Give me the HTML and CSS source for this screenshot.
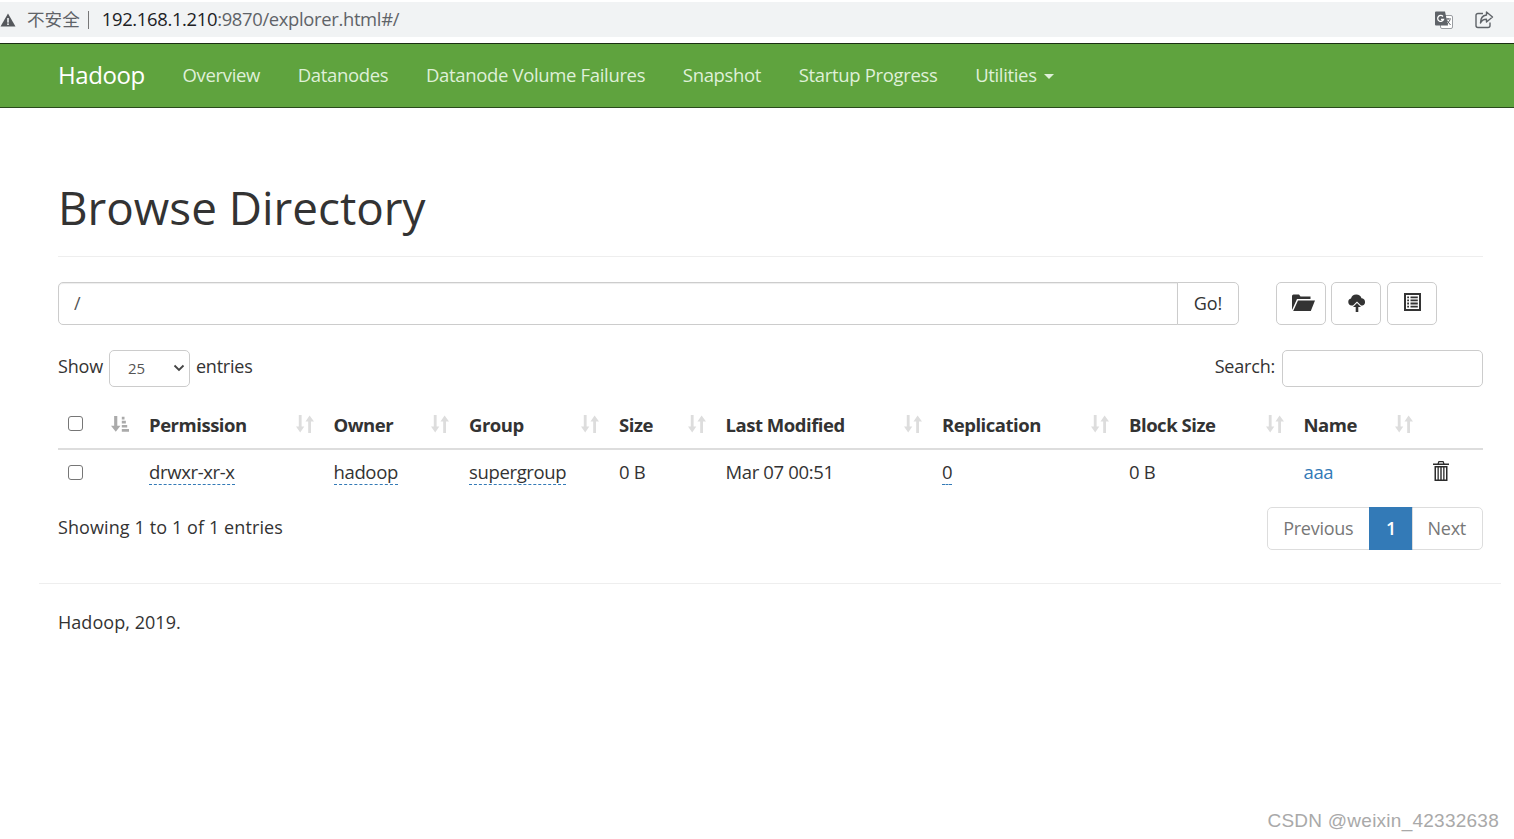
FILE: index.html
```html
<!DOCTYPE html>
<html lang="zh">
<head>
<meta charset="utf-8">
<title>Browsing HDFS</title>
<link rel="stylesheet" href="styles.css">
</head>
<body>
<div class="chrome">
  <div class="addr">
    <svg class="warn" viewBox="0 0 16 16" width="16" height="16"><path d="M8 1.500 15.500 14.500H.5Z" fill="#55585c"/><rect x="7.200" y="6" width="1.600" height="4.600" fill="#f1f3f4"/><rect x="7.200" y="11.400" width="1.600" height="1.600" fill="#f1f3f4"/></svg>
    <span class="insecure">不安全</span><span class="sep"></span>
    <span class="url"><span class="host">192.168.1.210</span>:9870/explorer.html#/</span>
    <span class="chrome-icons">
      <svg viewBox="0 0 20 20" width="20" height="20"><rect x="6.500" y="5.500" width="12" height="13" rx="1.500" fill="#fff" stroke="#9a9da1"/><path d="M1 2.500a1 1 0 0 1 1-1h9l3 14H2a1 1 0 0 1-1-1Z" fill="#5f6368"/><path d="M9 6.500A3 3 0 1 0 9.500 9.500H7" fill="none" stroke="#fff" stroke-width="1.300"/><path d="M11 9h6M14 8v1.500M12.500 15l3.500-5M12.500 10l4 5" fill="none" stroke="#5f6368"/></svg>
      <svg viewBox="0 0 20 20" width="20" height="20"><path d="M9 3.500H4a2 2 0 0 0-2 2v10a2 2 0 0 0 2 2h10a2 2 0 0 0 2-2v-3" fill="none" stroke="#5f6368" stroke-width="1.400"/><path d="M12.500 2 18.500 7l-6 5V9.200C9.500 9.200 7.500 10.500 6.500 13 6.500 9 8.500 5.500 12.500 5Z" fill="#f1f3f4" stroke="#5f6368" stroke-width="1.400" stroke-linejoin="round"/></svg>
    </span>
  </div>
</div>
<nav class="navbar">
  <a class="brand">Hadoop</a>
  <a class="nav-link">Overview</a>
  <a class="nav-link">Datanodes</a>
  <a class="nav-link">Datanode Volume Failures</a>
  <a class="nav-link">Snapshot</a>
  <a class="nav-link">Startup Progress</a>
  <a class="nav-link">Utilities <i class="caret"></i></a>
</nav>
<main class="container">
  <div class="page-header"><h1>Browse Directory</h1></div>
  <div class="toolbar">
    <div class="path-group">
      <input class="path-input" type="text" value="/">
      <button class="go-btn" type="button">Go!</button>
    </div>
    <div class="actions">
      <button class="icon-btn" type="button"><svg class="folder" viewBox="0 0 23 17" width="23" height="17"><path d="M0 15.500V2A1.500 1.500 0 0 1 1.500 .5H7L8.500 2.500H18.500V5H5L0.300 15.500ZM6 6.500H23L18.800 17H1.200Z" fill="#333"/></svg></button>
      <button class="icon-btn" type="button"><svg class="cloud" viewBox="0 0 18 18" width="18" height="18"><path d="M3.500 11.500a3.500 3.500 0 0 1-.5-6.900A5.500 5.500 0 0 1 13.500 4.300a3.700 3.700 0 0 1 1 7.200H13L9 7.500 5 11.500Z" fill="#333"/><path d="M9 9 13 13H10.300V18H7.700V13H5Z" fill="#333"/></svg></button>
      <button class="icon-btn" type="button"><svg class="list" viewBox="0 0 17 18" width="17" height="18"><path fill-rule="evenodd" d="M0 0H17V18H0ZM2 2V16H15V2Z" fill="#333"/><path d="M3.200 3.500H5V5.300H3.200ZM6.500 3.500H13.800V5.300H6.500ZM3.200 6.500H5V8.300H3.200ZM6.500 6.500H13.800V8.300H6.500ZM3.200 9.600H5V11.400H3.200ZM6.500 9.600H13.800V11.400H6.500ZM3.200 12.700H5V14.500H3.200ZM6.500 12.700H13.800V14.500H6.500Z" fill="#333"/></svg></button>
    </div>
  </div>
  <div class="table-controls">
    <label class="length"><span class="lift">Show</span> <span class="select-box">25<svg viewBox="0 0 12 8" width="12" height="8"><path d="M1.500 1.500 6 6l4.500-4.500" fill="none" stroke="#444" stroke-width="1.800"/></svg></span> <span class="lift">entries</span></label>
    <label class="filter"><span class="lift">Search:</span> <input class="search-input" type="search"></label>
  </div>
  <table class="listing">
    <colgroup>
      <col class="c0"><col class="c1"><col class="c2"><col class="c3"><col class="c4"><col class="c5"><col class="c6"><col class="c7"><col class="c8"><col class="c9">
    </colgroup>
    <thead>
      <tr>
        <th><div class="th-in"><span class="check head-check"></span><svg class="sort active" viewBox="0 0 20 18" width="18" height="18"><path d="M3.500 0H7V11H10.500L5.300 17.500 0 11H3.500Z"/><path d="M12 1H15V4H12ZM12 5.500H16.500V8.500H12ZM12 10H18V13H12ZM12 14.500H20V17.500H12Z"/></svg></div></th>
        <th><div class="th-in">Permission<svg class="sort" viewBox="0 0 18 18" width="18" height="18"><path d="M2.800 0H5.600V11.500H8.300L4.200 17.500 0 11.500H2.800Z"/><path d="M12.200 6.500V18H15V6.500H18L13.600 .5 9.500 6.500Z"/></svg></div></th>
        <th><div class="th-in">Owner<svg class="sort" viewBox="0 0 18 18" width="18" height="18"><path d="M2.800 0H5.600V11.500H8.300L4.200 17.500 0 11.500H2.800Z"/><path d="M12.200 6.500V18H15V6.500H18L13.600 .5 9.500 6.500Z"/></svg></div></th>
        <th><div class="th-in">Group<svg class="sort" viewBox="0 0 18 18" width="18" height="18"><path d="M2.800 0H5.600V11.500H8.300L4.200 17.500 0 11.500H2.800Z"/><path d="M12.200 6.500V18H15V6.500H18L13.600 .5 9.500 6.500Z"/></svg></div></th>
        <th><div class="th-in">Size<svg class="sort" viewBox="0 0 18 18" width="18" height="18"><path d="M2.800 0H5.600V11.500H8.300L4.200 17.500 0 11.500H2.800Z"/><path d="M12.200 6.500V18H15V6.500H18L13.600 .5 9.500 6.500Z"/></svg></div></th>
        <th><div class="th-in">Last Modified<svg class="sort" viewBox="0 0 18 18" width="18" height="18"><path d="M2.800 0H5.600V11.500H8.300L4.200 17.500 0 11.500H2.800Z"/><path d="M12.200 6.500V18H15V6.500H18L13.600 .5 9.500 6.500Z"/></svg></div></th>
        <th><div class="th-in">Replication<svg class="sort" viewBox="0 0 18 18" width="18" height="18"><path d="M2.800 0H5.600V11.500H8.300L4.200 17.500 0 11.500H2.800Z"/><path d="M12.200 6.500V18H15V6.500H18L13.600 .5 9.500 6.500Z"/></svg></div></th>
        <th><div class="th-in">Block Size<svg class="sort" viewBox="0 0 18 18" width="18" height="18"><path d="M2.800 0H5.600V11.500H8.300L4.200 17.500 0 11.500H2.800Z"/><path d="M12.200 6.500V18H15V6.500H18L13.600 .5 9.500 6.500Z"/></svg></div></th>
        <th><div class="th-in">Name<svg class="sort" viewBox="0 0 18 18" width="18" height="18"><path d="M2.800 0H5.600V11.500H8.300L4.200 17.500 0 11.500H2.800Z"/><path d="M12.200 6.500V18H15V6.500H18L13.600 .5 9.500 6.500Z"/></svg></div></th>
        <th></th>
      </tr>
    </thead>
    <tbody>
      <tr>
        <td><span class="check body-check"></span></td>
        <td><span class="editable">drwxr-xr-x</span></td>
        <td><span class="editable">hadoop</span></td>
        <td><span class="editable">supergroup</span></td>
        <td>0 B</td>
        <td>Mar 07 00:51</td>
        <td><span class="editable">0</span></td>
        <td>0 B</td>
        <td><a class="file-link">aaa</a></td>
        <td class="del"><svg viewBox="0 0 16 20" width="16" height="20"><path fill-rule="evenodd" d="M5.500 0H10.500L11.500 2.500H16V4H0V2.500H4.500ZM6.300 1.200 5.800 2.500H10.200L9.700 1.200ZM1.500 5H14.500V20H1.500ZM3 6.500V18.500H4.500V6.500ZM5.800 6.500V18.500H7.300V6.500ZM8.700 6.500V18.500H10.200V6.500ZM11.500 6.500V18.500H13V6.500Z" fill="#2b2b2b"/></svg></td>
      </tr>
    </tbody>
  </table>
  <div class="table-foot">
    <div class="info">Showing 1 to 1 of 1 entries</div>
    <ul class="pagination">
      <li class="page prev">Previous</li>
      <li class="page current">1</li>
      <li class="page next">Next</li>
    </ul>
  </div>
</main>
<hr class="rule">
<footer class="footer">Hadoop, 2019.</footer>
<div class="watermark">CSDN @weixin_42332638</div>
</body>
</html>
```

FILE: styles.css
```css
* { box-sizing: border-box; }
html, body { height: 100%; }
body {
  margin: 0;
  font-family: "Open Sans", "Noto Sans CJK SC", sans-serif;
  font-size: 18px;
  letter-spacing: -0.3px;
  line-height: 26px;
  color: #333;
  background: #fff;
  overflow: hidden;
  position: relative;
}
.chrome { height: 43px; padding-top: 2px; background: #fff; }
.addr {
  height: 35px;
  background: #f1f3f4;
  display: flex;
  align-items: center;
  font-size: 18px;
  color: #5f6368;
}
.warn { margin-left: 0; margin-right: 11px; }
.insecure { font-family: "Noto Sans CJK SC", sans-serif; font-size: 17.600px; letter-spacing: 0; margin-bottom: 2px; }
.sep { width: 1px; height: 18px; background: #777; margin: 0 13px 0 8px; }
.url { color: #5f6368; font-size: 18.400px; margin-bottom: 2px; letter-spacing: -0.33px; }
.host { color: #202124; }
.chrome-icons { margin-left: auto; margin-right: 20px; display: flex; gap: 20px; }
.navbar {
  height: 65px;
  background: #5fa33e;
  border-top: 1px solid #1a2f12;
  border-bottom: 1px solid #2a4a1c;
  display: flex;
  align-items: center;
  padding: 0 0 2px 58px;
  gap: 37.700px;
}
.brand { color: #fff; font-size: 24px; letter-spacing: -0.4px; font-weight: 500; }
.nav-link { color: #dff0d8; font-size: 18.500px; letter-spacing: -0.34px; }
.caret {
  display: inline-block;
  width: 0;
  height: 0;
  margin-left: 3px;
  vertical-align: middle;
  border-top: 5px solid #dff0d8;
  border-left: 5px solid transparent;
  border-right: 5px solid transparent;
}
.container { padding: 0 31px 0 58px; }
.page-header { margin-top: 66px; padding-bottom: 16px; border-bottom: 1px solid #eee; }
h1 { margin: 0; font-size: 45.800px; font-weight: 400; line-height: 66px; letter-spacing: 0; color: #333; }
.toolbar { display: flex; margin-top: 25px; height: 43px; }
.path-group { display: flex; width: 1181px; }
.path-input {
  flex: 1;
  height: 43px;
  border: 1px solid #ccc;
  border-radius: 5px 0 0 5px;
  padding: 0 15px 2px;
  font: inherit;
  color: #555;
  outline: none;
  box-shadow: inset 0 1px 1px rgba(0,0,0,.075);
}
.go-btn {
  width: 62px;
  height: 43px;
  margin-left: -1px;
  border: 1px solid #ccc;
  border-radius: 0 5px 5px 0;
  background: #fff;
  font: inherit;
  color: #333;
  padding: 0 0 2px;
}
.actions { display: flex; gap: 5px; margin-left: 37px; }
.icon-btn {
  width: 50px;
  height: 43px;
  border: 1px solid #ccc;
  border-radius: 5px;
  background: #fff;
  padding: 0 0 3px;
  display: flex;
  align-items: center;
  justify-content: center;
}
.icon-btn:last-child { margin-left: 1px; }
.folder { margin-left: 5px; }
.cloud { margin-left: 2px; margin-top: 2px; }
.table-controls { display: flex; justify-content: space-between; align-items: center; margin-top: 25px; height: 37px; letter-spacing: -0.2px; }
.length { display: flex; align-items: center; gap: 6px; }
.lift { margin-bottom: 5px; }
.select-box {
  width: 81px;
  height: 37px;
  border: 1px solid #ccc;
  border-radius: 5px;
  display: flex;
  align-items: center;
  justify-content: space-between;
  padding: 0 4px 2px 18px;
  font-size: 15px;
  letter-spacing: 0;
  color: #555;
}
.filter { display: flex; align-items: center; gap: 7px; }
.search-input { width: 201px; height: 37px; border: 1px solid #ccc; border-radius: 5px; outline: none; }
.listing { width: 100%; table-layout: fixed; border-collapse: collapse; margin-top: 18px; }
.c0 { width: 80px; } .c1 { width: 184.500px; } .c2 { width: 135.500px; } .c3 { width: 150px; } .c4 { width: 106.500px; }
.c5 { width: 216.500px; } .c6 { width: 187px; } .c7 { width: 174.500px; } .c8 { width: 129.500px; } .c9 { width: 61px; }
th {
  height: 44px;
  padding: 0 9px 4px 11px;
  text-align: left;
  font-weight: 700;
  border-bottom: 2px solid #ddd;
  font-size: 18.500px;
  letter-spacing: -0.47px;
}
.th-in { display: flex; justify-content: space-between; align-items: center; }
th:first-child { padding-left: 10px; }
.sort { fill: #ddd; flex: none; margin-top: -2px; }
.sort.active { fill: #aaa; }
td { height: 46px; padding: 0 11px 2px; vertical-align: middle; font-size: 18.500px; letter-spacing: -0.36px; }
td:first-child { padding-left: 10px; }
.check {
  display: block;
  width: 15px;
  height: 15px;
  border: 1px solid #767676;
  border-radius: 3px;
  background: #fff;
  flex: none;
}
.head-check { margin-top: -2px; }
.body-check { margin-top: 2px; }
.editable { border-bottom: 1px dashed #337ab7; display: inline-block; line-height: 25px; color: #333; }
.file-link { color: #337ab7; }
.del { padding: 0 0 0 11px; }
.del svg { display: block; margin-top: -4px; }
.table-foot { display: flex; justify-content: space-between; margin-top: 12px; }
.info { line-height: 40px; letter-spacing: 0.1px; }
.pagination { display: flex; list-style: none; margin: 0; padding: 0; height: 43px; letter-spacing: -0.25px; }
.page {
  border: 1px solid #ddd;
  margin-left: -1px;
  line-height: 41px;
  color: #777;
}
.prev { padding: 0 16px 0 15px; border-radius: 5px 0 0 5px; }
.next { padding: 0 16px 0 15px; border-radius: 0 5px 5px 0; }
.page.current { padding: 0 15.500px; background: #337ab7; border-color: #337ab7; color: #fff; font-weight: 600; }
.rule { margin: 33px 13px 0 39px; border: 0; border-top: 1px solid #eee; }
.footer { margin: 25px 0 0 58px; letter-spacing: 0.05px; }
.watermark {
  position: absolute;
  right: 15px;
  bottom: 5px;
  font-family: "Liberation Sans", sans-serif;
  font-size: 19px;
  letter-spacing: .25px;
  color: #a9a9a9;
}
```
